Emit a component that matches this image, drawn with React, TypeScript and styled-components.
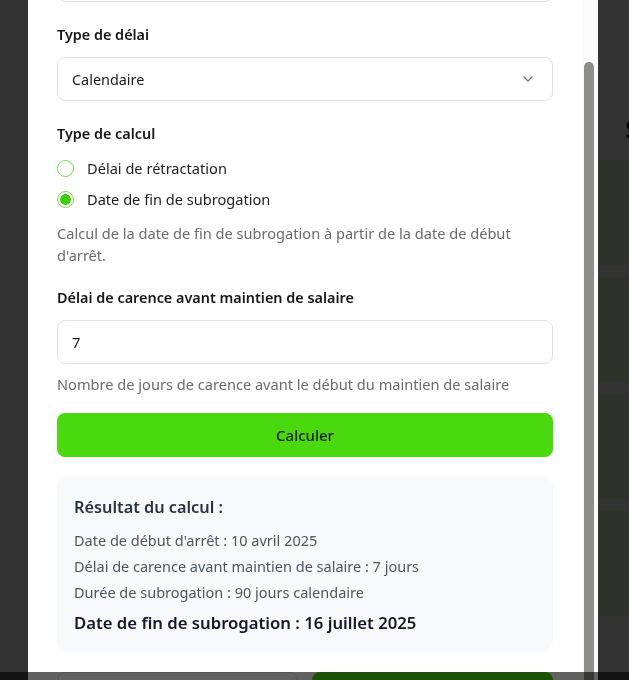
import { useLayoutEffect, useRef } from 'react';
import styled, { createGlobalStyle } from 'styled-components';
import { ChevronDown } from 'lucide-react';

const GREEN = '#4ad80f';

const GlobalStyle = createGlobalStyle`
  html, body {
    margin: 0;
    padding: 0;
    height: 100%;
    overflow: hidden;
  }
  body {
    font-family: "Noto Sans", "Open Sans", sans-serif;
    background: #ffffff;
  }
  * {
    box-sizing: border-box;
  }
`;

const resultLines = [
  "Date de début d'arrêt : 10 avril 2025",
  'Délai de carence avant maintien de salaire : 7 jours',
  'Durée de subrogation : 90 jours calendaire',
];

const backgroundRows = [1, 2, 3, 4];

const App = () => {
  const scrollRef = useRef<HTMLDivElement>(null);

  useLayoutEffect(() => {
    if (scrollRef.current) scrollRef.current.scrollTop = 68;
  }, []);

  return (
    <>
      <GlobalStyle />
      <StyledPage>
        <StyledPageHeader>
          <span>Suivi des arrêts</span>
        </StyledPageHeader>
        <StyledRowList>
          {backgroundRows.map((r) => (
            <StyledPageRow key={`row-${r}`} />
          ))}
        </StyledRowList>
      </StyledPage>
      <StyledBackdrop />
      <StyledModal>
        <StyledModalBody ref={scrollRef}>
          <StyledField $after={22}>
            <StyledInput defaultValue="10/04/2025" />
          </StyledField>

          <StyledField $after={22}>
            <StyledLabel>Type de délai</StyledLabel>
            <StyledSelect>
              <span>Calendaire</span>
              <ChevronDown size={16} strokeWidth={1.6} color="#6b6b6b" />
            </StyledSelect>
          </StyledField>

          <StyledField $after={21}>
            <StyledLabel>Type de calcul</StyledLabel>
            <StyledRadioList>
              <StyledRadioRow>
                <StyledRadio $checked={false} />
                <span>Délai de rétractation</span>
              </StyledRadioRow>
              <StyledRadioRow>
                <StyledRadio $checked />
                <span>Date de fin de subrogation</span>
              </StyledRadioRow>
            </StyledRadioList>
            <StyledHint $top={12}>
              Calcul de la date de fin de subrogation à partir de la date de
              début d'arrêt.
            </StyledHint>
          </StyledField>

          <StyledField $after={18}>
            <StyledLabel>Délai de carence avant maintien de salaire</StyledLabel>
            <StyledInput defaultValue="7" />
            <StyledHint $top={9}>
              Nombre de jours de carence avant le début du maintien de salaire
            </StyledHint>
          </StyledField>

          <StyledPrimaryButton>Calculer</StyledPrimaryButton>

          <StyledResult>
            <StyledResultTitle>Résultat du calcul :</StyledResultTitle>
            {resultLines.map((l) => (
              <StyledResultLine key={`r-${l}`}>{l}</StyledResultLine>
            ))}
            <StyledResultFinal>
              Date de fin de subrogation : 16 juillet 2025
            </StyledResultFinal>
          </StyledResult>

          <StyledFooter>
            <StyledSecondaryButton>Fermer</StyledSecondaryButton>
            <StyledPrimaryButton>Enregistrer</StyledPrimaryButton>
          </StyledFooter>
        </StyledModalBody>
        <StyledScrollTrack>
          <StyledScrollThumb />
        </StyledScrollTrack>
      </StyledModal>
      <StyledBottomShade />
    </>
  );
};

const StyledPage = styled.div`
  height: 100vh;
  background: #ffffff;
  display: flex;
  flex-direction: column;
`;

const StyledPageHeader = styled.div`
  height: 160px;
  display: flex;
  align-items: flex-start;
  justify-content: flex-end;
  padding-top: 114px;
  font-size: 24px;
  line-height: 30px;
  font-weight: 600;
  color: #111111;

  span {
    width: 5px;
    margin-right: -1px;
    overflow: hidden;
    white-space: nowrap;
  }
`;

const StyledRowList = styled.div`
  display: flex;
  flex-direction: column;
  gap: 12px;
  padding-left: 300px;
`;

const StyledPageRow = styled.div`
  height: 105px;
  background: #e2f8cf;
`;

const StyledBackdrop = styled.div`
  position: fixed;
  inset: 0;
  background: rgba(0, 0, 0, 0.8);
`;

const StyledModal = styled.div`
  position: fixed;
  top: 0;
  left: 28px;
  width: 570px;
  height: 740px;
  background: #ffffff;
  display: flex;
  color: #1a1a1a;
`;

const StyledModalBody = styled.div`
  flex: 1;
  min-width: 0;
  overflow-y: auto;
  padding: 26px 30px 24px 29px;
  display: flex;
  flex-direction: column;
  scrollbar-width: none;

  &::-webkit-scrollbar {
    display: none;
  }
`;

const StyledScrollTrack = styled.div`
  width: 15px;
  flex-shrink: 0;
  padding: 62px 4px 0 1px;
  background: #fcfcfc;
`;

const StyledScrollThumb = styled.div`
  height: 100%;
  background: #8e8e8a;
  border-radius: 5px 5px 0 0;
`;

const StyledField = styled.div<{ $after: number }>`
  display: flex;
  flex-direction: column;
  flex-shrink: 0;
  margin-bottom: ${(props) => props.$after}px;
`;

const StyledLabel = styled.label`
  font-size: 14.4px;
  font-weight: 600;
  line-height: 22px;
  margin-bottom: 11px;
  color: #161616;
`;

const StyledInput = styled.input`
  height: 44px;
  border: 1px solid #e3e3e3;
  border-radius: 8px;
  padding: 0 14px;
  font-family: inherit;
  font-size: 14.6px;
  color: #1a1a1a;
  background: #ffffff;
  outline: none;
`;

const StyledSelect = styled.div`
  height: 44px;
  border: 1px solid #e3e3e3;
  border-radius: 8px;
  padding: 0 16px 0 14px;
  display: flex;
  align-items: center;
  justify-content: space-between;
  font-size: 14.4px;
  color: #1a1a1a;
`;

const StyledRadioList = styled.div`
  display: flex;
  flex-direction: column;
  gap: 9px;
  margin-top: 1px;
`;

const StyledRadioRow = styled.div`
  display: flex;
  align-items: center;
  gap: 13px;
  height: 22px;
  font-size: 14.6px;
  color: #1f1f1f;
`;

const StyledRadio = styled.span<{ $checked: boolean }>`
  width: 17px;
  height: 17px;
  border-radius: 50%;
  border: 1.5px solid #6fe046;
  background: ${(props) =>
    props.$checked ? 'radial-gradient(circle, #3ccf0c 0 5px, #ffffff 5.5px)' : '#ffffff'};
  flex-shrink: 0;
`;

const StyledHint = styled.p<{ $top: number }>`
  margin: ${(props) => props.$top}px 0 0 0;
  font-size: 14.6px;
  line-height: 22px;
  color: #6b6b6b;
`;

const StyledPrimaryButton = styled.button`
  height: 44px;
  flex-shrink: 0;
  width: 100%;
  border: none;
  border-radius: 8px;
  background: ${GREEN};
  font-family: inherit;
  font-size: 15px;
  font-weight: 500;
  color: #1a1a1a;
  cursor: pointer;
`;

const StyledSecondaryButton = styled.button`
  height: 44px;
  width: 100%;
  border: 1px solid #dcdcdc;
  border-radius: 8px;
  background: #ffffff;
  font-family: inherit;
  font-size: 15px;
  color: #1a1a1a;
`;

const StyledResult = styled.div`
  margin-top: 19px;
  flex-shrink: 0;
  background: #f8f9fb;
  border-radius: 12px;
  padding: 18px 17px 16px 17px;
  display: flex;
  flex-direction: column;
`;

const StyledResultTitle = styled.h3`
  margin: 0 0 7px 0;
  font-size: 16.3px;
  font-weight: 600;
  line-height: 26px;
  color: #283241;
`;

const StyledResultLine = styled.p`
  margin: 0;
  font-size: 14.5px;
  line-height: 26px;
  color: #4d5562;
`;

const StyledResultFinal = styled.p`
  margin: 5px 0 0 0;
  font-size: 16.7px;
  font-weight: 600;
  line-height: 26px;
  color: #111827;
`;

const StyledFooter = styled.div`
  margin-top: 20px;
  flex-shrink: 0;
  display: grid;
  grid-template-columns: 1fr 1fr;
  gap: 14px;
`;

const StyledBottomShade = styled.div`
  position: fixed;
  left: 0;
  right: 0;
  bottom: 0;
  height: 8px;
  background: rgba(0, 0, 0, 0.62);
`;

export default App;
